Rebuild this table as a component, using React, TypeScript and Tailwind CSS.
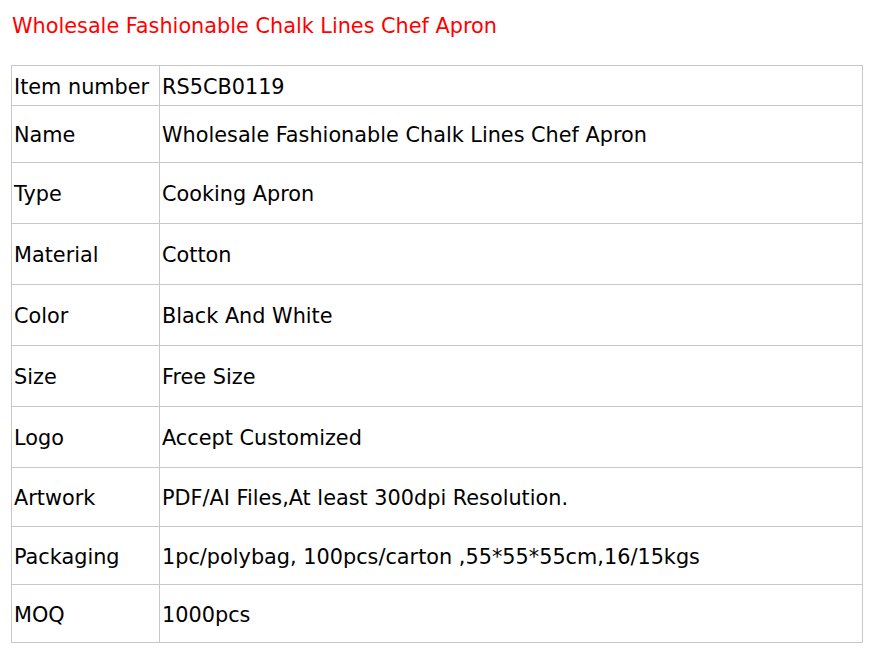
import React from "react";

const rows: [string, string, number][] = [
  ["Item number", "RS5CB0119", 40],
  ["Name", "Wholesale Fashionable Chalk Lines Chef Apron", 57],
  ["Type", "Cooking Apron", 61],
  ["Material", "Cotton", 61],
  ["Color", "Black And White", 61],
  ["Size", "Free Size", 61],
  ["Logo", "Accept Customized", 61],
  ["Artwork", "PDF/AI Files,At least 300dpi Resolution.", 59],
  ["Packaging", "1pc/polybag, 100pcs/carton ,55*55*55cm,16/15kgs", 58],
  ["MOQ", "1000pcs", 58],
];

export default function App() {
  return (
    <div
      className="w-[882px] h-[655px] bg-white text-black"
      style={{ fontFamily: '"DejaVu Sans", sans-serif' }}
    >
      <div className="pt-[13px] pl-[12px] h-[65px] text-[20.8px] leading-[26px] text-[#ff0000]">
        Wholesale Fashionable Chalk Lines Chef Apron
      </div>
      <div className="ml-[11px] w-[852px] border border-[#c8c8c8]">
        {rows.map(([k, v, h], i) => (
          <div
            key={k}
            className={`flex ${i > 0 ? "border-t border-[#c8c8c8]" : ""}`}
          >
            <div
              className="w-[148px] shrink-0 flex items-center pl-[2px] pt-[4px] text-[20.8px] whitespace-nowrap border-r border-[#c8c8c8]"
              style={{ height: h - 1 }}
            >
              {k}
            </div>
            <div className="flex items-center pl-[2px] pt-[4px] text-[20.8px] whitespace-nowrap">{v}</div>
          </div>
        ))}
      </div>
    </div>
  );
}
